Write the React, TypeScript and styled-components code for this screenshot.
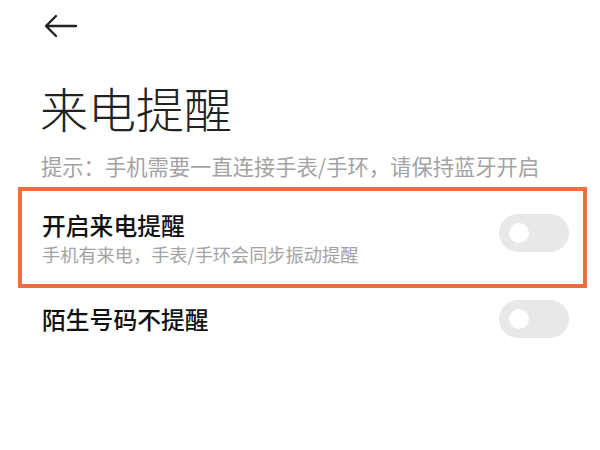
import React from "react";
import styled, { createGlobalStyle } from "styled-components";

const GlobalStyle = createGlobalStyle`
  html, body {
    margin: 0;
    padding: 0;
    background: #ffffff;
  }
  body {
    font-family: "Noto Sans CJK SC", "Noto Sans", sans-serif;
    color: #111111;
  }
`;

const Page = styled.div`
  width: 600px;
  height: 450px;
  overflow: hidden;
  background: #ffffff;
`;

const TopBar = styled.div`
  height: 52px;
  padding-left: 44px;
  display: flex;
  align-items: center;
`;

const BackButton = styled.button`
  border: none;
  background: none;
  padding: 0;
  width: 34px;
  height: 24px;
  display: flex;
  align-items: center;
  color: #222222;
`;

const Title = styled.h1`
  margin: 23px 0 0 40px;
  font-size: 48px;
  line-height: 64px;
  font-weight: 300;
  color: #222222;
`;

const Hint = styled.p`
  margin: 12px 0 0 41px;
  font-size: 21.3px;
  line-height: 30px;
  color: #a3a3a3;
  white-space: nowrap;
`;

const SettingRow = styled.div<{ $highlight?: boolean }>`
  display: flex;
  align-items: center;
  justify-content: space-between;
  box-sizing: border-box;
  margin: ${(p) => (p.$highlight ? "6px 13px 0 18px" : "0 13px 0 18px")};
  height: ${(p) => (p.$highlight ? "101px" : "62px")};
  padding: 0 14px 0 20px;
  border: 4px solid ${(p) => (p.$highlight ? "#f26d3d" : "transparent")};
`;

const TextCol = styled.div`
  display: flex;
  flex-direction: column;
`;

const RowTitle = styled.div`
  font-size: 23.8px;
  line-height: 32px;
  font-weight: 500;
  color: #111111;
`;

const RowDesc = styled.div`
  font-size: 18.2px;
  line-height: 26px;
  color: #a3a3a3;
  white-space: nowrap;
`;

const Toggle = styled.div<{ $raise?: number }>`
  position: relative;
  width: 70px;
  height: 38px;
  border-radius: 19px;
  background: #e8e8e8;
  flex-shrink: 0;
  margin-bottom: ${(p) => p.$raise ?? 0}px;
`;

const Knob = styled.span`
  position: absolute;
  left: 10px;
  top: 9px;
  width: 20px;
  height: 20px;
  border-radius: 50%;
  background: #ffffff;
`;

const Switch = ({ raise }: { raise?: number }) => (
  <Toggle $raise={raise}>
    <Knob />
  </Toggle>
);

const App = (): JSX.Element => {
  return (
    <>
      <GlobalStyle />
      <Page>
        <TopBar>
          <BackButton aria-label="返回">
            <svg width="34" height="24" viewBox="0 0 34 24" fill="none">
              <path
                d="M32 12H3M12 2L2 12L12 22"
                stroke="currentColor"
                strokeWidth="2.4"
                strokeLinecap="round"
                strokeLinejoin="round"
              />
            </svg>
          </BackButton>
        </TopBar>
        <Title>来电提醒</Title>
        <Hint>提示：手机需要一直连接手表/手环，请保持蓝牙开启</Hint>
        <SettingRow $highlight>
          <TextCol>
            <RowTitle>开启来电提醒</RowTitle>
            <RowDesc>手机有来电，手表/手环会同步振动提醒</RowDesc>
          </TextCol>
          <Switch raise={10} />
        </SettingRow>
        <SettingRow>
          <TextCol>
            <RowTitle>陌生号码不提醒</RowTitle>
          </TextCol>
          <Switch />
        </SettingRow>
      </Page>
    </>
  );
};

export default App;
